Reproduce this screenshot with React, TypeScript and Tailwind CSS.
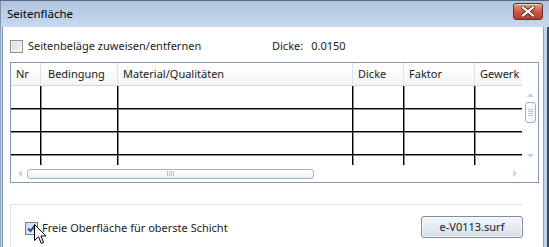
import React from "react";

const font = { fontFamily: '"Noto Sans", "Open Sans", sans-serif' };

const cols = [
  { label: "Nr", w: "w-[30px]", pl: "pl-[5px]" },
  { label: "Bedingung", w: "w-[77px]", pl: "pl-[7px]" },
  { label: "Material/Qualitäten", w: "w-[235px]", pl: "pl-[5px]" },
  { label: "Dicke", w: "w-[51px]", pl: "pl-[5px]" },
  { label: "Faktor", w: "w-[71px]", pl: "pl-[5px]" },
  { label: "Gewerk", w: "w-[47px]", pl: "pl-[5px]" },
];

function CloseButton() {
  return (
    <div className="mr-[6px] mt-[-5px] flex h-[17px] w-[30px] items-center justify-center rounded-[3px] border border-[#6d2a20] bg-gradient-to-b from-[#e3a08f] via-[#c95b43] to-[#b73d25] shadow-[inset_0_1px_0_rgba(255,255,255,0.5)]">
      <svg width="14" height="11" viewBox="0 0 14 11">
        <path d="M2 1.5 L12 9.5 M12 1.5 L2 9.5" stroke="#5a2a22" strokeWidth="4" strokeLinecap="square" />
        <path d="M2 1.5 L12 9.5 M12 1.5 L2 9.5" stroke="#ffffff" strokeWidth="2.2" strokeLinecap="square" />
      </svg>
    </div>
  );
}

function Checkbox({ checked }: { checked?: boolean }) {
  if (checked) {
    return (
      <div className="flex h-[13px] w-[13px] shrink-0 items-center justify-center border border-[#5b86b8] bg-gradient-to-br from-[#c9dff5] to-[#e8f2fc]">
        <svg width="9" height="9" viewBox="0 0 9 9">
          <path d="M1 4.5 L3.5 7 L8 1.5" stroke="#2c4e80" strokeWidth="2" fill="none" />
        </svg>
      </div>
    );
  }
  return (
    <div className="h-[13px] w-[13px] shrink-0 border border-[#8e8f8f] bg-gradient-to-br from-[#d8d9db] to-[#f7f7f7] shadow-[inset_0_0_0_1px_#f4f4f4]" />
  );
}

function Cursor() {
  return (
    <svg className="absolute left-[9px] top-[4px]" width="14" height="22" viewBox="0 0 14 22">
      <path
        d="M0.5 0.5 L0.5 16.5 L4.5 12.8 L7.3 19.5 L9.6 18.5 L6.9 12 L12 12 Z"
        fill="#ffffff"
        stroke="#000000"
        strokeWidth="1"
        strokeLinejoin="miter"
      />
    </svg>
  );
}

function DataRow() {
  return (
    <div className="flex h-[23px] w-[511px] shrink-0 border-b border-black shadow-[0_1px_0_#8a8a8a]">
      {cols.map((c, i) => (
        <div
          key={c.label}
          className={`${c.w} h-full shrink-0 ${i < cols.length - 1 ? "border-r border-black shadow-[1px_0_0_#8a8a8a]" : ""}`}
        />
      ))}
    </div>
  );
}

export default function App() {
  return (
    <div
      className="flex h-[247px] w-[549px] flex-col overflow-hidden border-t border-[#586b82] bg-[#c3d6ec] text-[11px] text-[#1b1b1b]"
      style={font}
    >
      {/* title bar */}
      <div className="flex h-[26px] shrink-0 items-center justify-between border-l border-[#7f93ad] bg-gradient-to-b from-[#afc5df] to-[#c7d9ee] pl-[6px]">
        <span className="text-[11.5px] text-black">Seitenfläche</span>
        <CloseButton />
      </div>

      <div className="flex flex-1 overflow-hidden">
        {/* left frame */}
        <div className="w-[3px] shrink-0 border-l border-r border-l-[#8ea4c1] border-r-[#7d94b3] bg-[#c7daef]" />

        {/* client area */}
        <div className="flex w-[540px] shrink-0 flex-col bg-white pl-[7px] pt-[13px]">
          <div className="flex h-[13px] items-center">
            <Checkbox />
            <span className="ml-[5px] w-[244px]">Seitenbeläge zuweisen/entfernen</span>
            <span>Dicke:</span>
            <span className="ml-[8px]">0.0150</span>
          </div>

          {/* table */}
          <div className="mt-[9px] flex h-[121px] w-[529px] flex-col border border-[#849bb8]">
            <div className="flex h-[23px] shrink-0">
              <div className="flex w-[511px] border-b border-[#d5d9de] bg-gradient-to-b from-white to-[#f3f4f6]">
                {cols.map((c, i) => (
                  <div
                    key={c.label}
                    className={`${c.w} ${c.pl} flex shrink-0 items-center overflow-hidden whitespace-nowrap ${i < cols.length - 1 ? "border-r border-[#dde2e8]" : ""}`}
                  >
                    {c.label}
                  </div>
                ))}
              </div>
              <div className="w-[16px]" />
            </div>

            <div className="flex h-[79px] shrink-0">
              <div className="flex w-[511px] flex-col overflow-hidden">
                <DataRow />
                <DataRow />
                <DataRow />
                <DataRow />
              </div>
              {/* vertical scrollbar */}
              <div className="flex w-[16px] flex-col items-center">
                <svg className="mt-[7px]" width="7" height="4" viewBox="0 0 7 4">
                  <path d="M0 4 L3.5 0 L7 4 Z" fill="#c5d1de" />
                </svg>
                <div className="mt-[5px] flex h-[21px] w-[11px] flex-col items-center justify-center gap-[1px] rounded-[3px] border border-[#a3b2c3] bg-gradient-to-r from-white to-[#eef2f6]">
                  <div className="h-px w-[5px] bg-[#b6c2cf]" />
                  <div className="h-px w-[5px] bg-[#b6c2cf]" />
                  <div className="h-px w-[5px] bg-[#b6c2cf]" />
                  <div className="h-px w-[5px] bg-[#b6c2cf]" />
                </div>
                <svg className="mt-[31px]" width="7" height="4" viewBox="0 0 7 4">
                  <path d="M0 0 L7 0 L3.5 4 Z" fill="#c5d1de" />
                </svg>
              </div>
            </div>

            {/* horizontal scrollbar */}
            <div className="flex h-[17px] shrink-0">
              <div className="flex w-[511px] items-center">
                <svg className="ml-[7px]" width="4" height="7" viewBox="0 0 4 7">
                  <path d="M4 0 L0 3.5 L4 7 Z" fill="#c5d1de" />
                </svg>
                <div className="ml-[5px] flex h-[10px] w-[287px] items-center justify-center gap-[1px] rounded-[3px] border border-[#a3b2c3] bg-gradient-to-b from-white to-[#eef2f6]">
                  <div className="h-[5px] w-px bg-[#b6c2cf]" />
                  <div className="h-[5px] w-px bg-[#b6c2cf]" />
                  <div className="h-[5px] w-px bg-[#b6c2cf]" />
                  <div className="h-[5px] w-px bg-[#b6c2cf]" />
                </div>
                <div className="flex-1" />
                <svg className="mr-[5px]" width="4" height="7" viewBox="0 0 4 7">
                  <path d="M0 0 L4 3.5 L0 7 Z" fill="#c5d1de" />
                </svg>
              </div>
              <div className="w-[16px]" />
            </div>
          </div>

          {/* group box */}
          <div className="mt-[21px] flex w-[513px] flex-1 items-start justify-between border-l border-t border-[#dce2e9] pl-[14px] pt-[11px]">
            <div className="relative mt-[4px] flex items-center">
              <Checkbox checked />
              <span className="ml-[4px]">Freie Oberfläche für oberste Schicht</span>
              <Cursor />
            </div>
            <div className="flex h-[22px] w-[102px] items-center justify-center rounded-[3px] border border-[#7e8c9b] bg-gradient-to-b from-[#f3f6fa] via-[#e4ebf2] to-[#d4dee9] shadow-[inset_0_0_0_1px_rgba(255,255,255,0.7)]">
              e-V0113.surf
            </div>
          </div>
        </div>

        {/* right frame */}
        <div className="w-[6px] shrink-0 border-l border-r-2 border-l-[#8fa3bd] border-r-[#3d4b5c] bg-[#c3d6ec]" />
      </div>
    </div>
  );
}
